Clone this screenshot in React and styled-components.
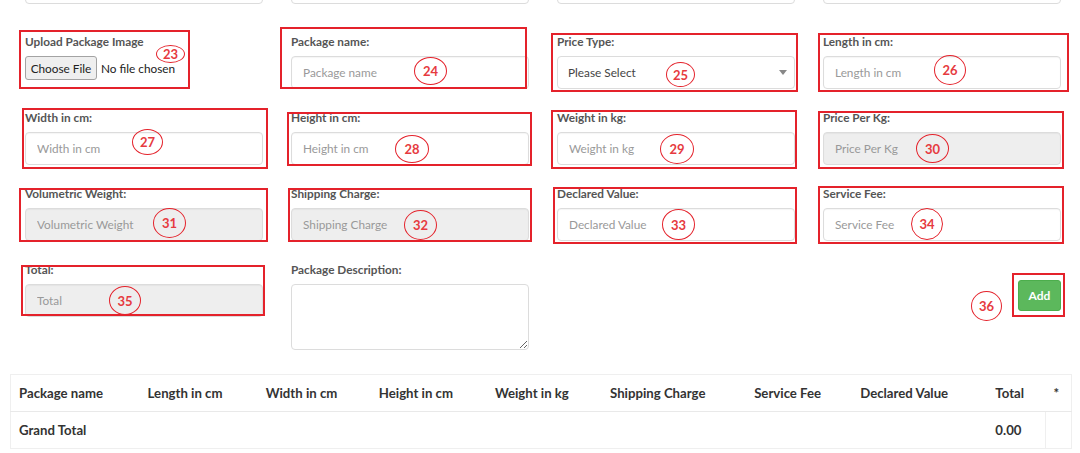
import React from "react";
import styled, { createGlobalStyle } from "styled-components";

const Global = createGlobalStyle`
  html, body { margin: 0; padding: 0; background: #fff; }
  body { font-family: Lato, "Open Sans", "Liberation Sans", sans-serif; color: #333; }
  * { box-sizing: border-box; }
`;

const Page = styled.div`
  position: relative;
  width: 1080px;
  height: 453px;
  overflow: hidden;
  background: #fff;
`;

const Form = styled.div`
  display: grid;
  grid-template-columns: repeat(4, 266px);
  row-gap: 20px;
  margin: -29px 0 0 11px;
`;

const Group = styled.div`
  display: flex;
  flex-direction: column;
  padding: 0 14px;
  margin-bottom: ${(p) => (p.$extra ? `${p.$extra}px` : "0")};
`;

const Label = styled.label`
  display: block;
  height: 18px;
  line-height: 18px;
  margin-bottom: 5px;
  font-size: 11.8px;
  font-weight: 700;
  color: #555;
  white-space: nowrap;
`;

const Input = styled.input`
  width: 238px;
  height: 33px;
  padding: 0 11px;
  border: 1px solid #dcdcdc;
  border-radius: 4px;
  background: ${(p) => (p.disabled ? "#eeeeee" : "#fff")};
  font-family: inherit;
  font-size: 11.8px;
  color: #555;
  box-shadow: inset 0 1px 1px rgba(0, 0, 0, 0.04);
  &::placeholder { color: #999; opacity: 1; }
`;

const TextArea = styled.textarea`
  width: 238px;
  height: 66px;
  padding: 6px 11px;
  border: 1px solid #dcdcdc;
  border-radius: 4px;
  resize: vertical;
  font-family: inherit;
  font-size: 11.8px;
  display: block;
`;

const SelectBox = styled.div`
  position: relative;
  width: 238px;
  height: 33px;
  padding: 0 10px;
  border: 1px solid #dcdcdc;
  border-radius: 4px;
  display: flex;
  align-items: center;
  font-size: 11.8px;
  color: #444;
`;

const Caret = styled.span`
  position: absolute;
  right: 7px;
  top: 13px;
  width: 0;
  height: 0;
  border-left: 4px solid transparent;
  border-right: 4px solid transparent;
  border-top: 5px solid #888;
`;

const FileRow = styled.div`
  display: flex;
  align-items: center;
  gap: 4px;
  height: 24px;
  font-size: 11.8px;
  color: #222;
`;

const FileButton = styled.span`
  display: inline-flex;
  align-items: center;
  justify-content: center;
  width: 72px;
  height: 24px;
  border: 1px solid #a3a3a3;
  border-radius: 3px;
  background: #efefef;
  color: #222;
  font-size: 11.8px;
`;

const ButtonCell = styled.div`
  display: flex;
  justify-content: flex-end;
  padding: 19px 14px 0;
`;

const AddButton = styled.button`
  width: 43px;
  height: 31px;
  border: 1px solid #4cae4c;
  border-radius: 3px;
  background: #5cb85c;
  color: #fff;
  font-family: inherit;
  font-size: 12px;
  font-weight: 700;
  padding: 0;
`;

const Table = styled.table`
  margin: 24px 0 0 10px;
  width: 1062px;
  table-layout: fixed;
  border-collapse: collapse;
  border: 1px solid #efefef;
  font-size: 13.2px;
  font-weight: 700;
  color: #333;
`;

const Cell = styled.td`
  padding: 8px;
  height: ${(p) => (p.$head ? "36px" : "37px")};
  line-height: 20px;
  text-align: left;
  white-space: nowrap;
  border-top: ${(p) => (p.$head ? "none" : "1px solid #e9e9e9")};
  border-left: ${(p) => (p.$divider ? "1px solid #efefef" : "none")};
  vertical-align: ${(p) => (p.$star ? "top" : "middle")};
`;

const Box = styled.div`
  position: absolute;
  left: ${(p) => p.$x}px;
  top: ${(p) => p.$y}px;
  width: ${(p) => p.$w}px;
  height: ${(p) => p.$h}px;
  border: 2px solid #e4222b;
  pointer-events: none;
`;

const Bubble = styled.div`
  position: absolute;
  left: ${(p) => p.$x}px;
  top: ${(p) => p.$y}px;
  width: ${(p) => p.$w}px;
  height: ${(p) => p.$h}px;
  border: 1.5px solid #e4222b;
  border-radius: 50%;
  display: flex;
  align-items: center;
  justify-content: center;
  color: #e63a40;
  font-size: 13px;
  font-weight: 700;
  pointer-events: none;
`;

const topRow = ["receiver-name", "receiver-phone", "receiver-email", "receiver-address"];

const fields = [
  { label: "Width in cm:", ph: "Width in cm" },
  { label: "Height in cm:", ph: "Height in cm" },
  { label: "Weight in kg:", ph: "Weight in kg" },
  { label: "Price Per Kg:", ph: "Price Per Kg", disabled: true },
  { label: "Volumetric Weight:", ph: "Volumetric Weight", disabled: true },
  { label: "Shipping Charge:", ph: "Shipping Charge", disabled: true },
  { label: "Declared Value:", ph: "Declared Value" },
  { label: "Service Fee:", ph: "Service Fee" },
];

const columns = [
  { t: "Package name", w: 129 },
  { t: "Length in cm", w: 118 },
  { t: "Width in cm", w: 113 },
  { t: "Height in cm", w: 116 },
  { t: "Weight in kg", w: 115 },
  { t: "Shipping Charge", w: 144 },
  { t: "Service Fee", w: 106 },
  { t: "Declared Value", w: 135 },
  { t: "Total", w: 58 },
  { t: "*", w: 26 },
];

const boxes = [
  [19, 30, 190, 89],
  [280, 27, 527, 89],
  [551, 33, 798, 92],
  [818, 33, 1069, 92],
  [22, 108, 268, 169],
  [287, 112, 532, 166],
  [551, 110, 797, 169],
  [818, 111, 1064, 169],
  [19, 188, 268, 242],
  [288, 188, 532, 242],
  [553, 187, 797, 244],
  [818, 186, 1064, 244],
  [21, 265, 265, 316],
  [1012, 273, 1065, 317],
];

const bubbles = [
  [23, 156, 45, 185, 63],
  [24, 414, 57, 447, 85],
  [25, 666, 62, 695, 87],
  [26, 934, 55, 966, 85],
  [27, 132, 129, 163, 155],
  [28, 395, 135, 429, 163],
  [29, 660, 134, 694, 164],
  [30, 916, 134, 949, 163],
  [31, 153, 208, 186, 238],
  [32, 404, 210, 437, 240],
  [33, 662, 209, 695, 240],
  [34, 911, 208, 943, 240],
  [35, 109, 286, 141, 315],
  [36, 971, 291, 1002, 321],
];

export default function App() {
  return (
    <Page>
      <Global />
      <Form>
        {topRow.map((l) => (
          <Group key={l} $extra={9}>
            <Input aria-label={l} />
          </Group>
        ))}

        <Group>
          <Label>Upload Package Image</Label>
          <FileRow>
            <FileButton>Choose File</FileButton>
            <span>No file chosen</span>
          </FileRow>
        </Group>
        <Group>
          <Label>Package name:</Label>
          <Input placeholder="Package name" />
        </Group>
        <Group>
          <Label>Price Type:</Label>
          <SelectBox>
            Please Select
            <Caret />
          </SelectBox>
        </Group>
        <Group>
          <Label>Length in cm:</Label>
          <Input placeholder="Length in cm" />
        </Group>

        {fields.map((f) => (
          <Group key={f.label}>
            <Label>{f.label}</Label>
            <Input placeholder={f.ph} disabled={f.disabled} />
          </Group>
        ))}

        <Group>
          <Label>Total:</Label>
          <Input placeholder="Total" disabled />
        </Group>
        <Group>
          <Label>Package Description:</Label>
          <TextArea />
        </Group>
        <div />
        <ButtonCell>
          <AddButton>Add</AddButton>
        </ButtonCell>
      </Form>

      <Table>
        <colgroup>
          {columns.map((c) => (
            <col key={c.t} style={{ width: c.w }} />
          ))}
        </colgroup>
        <thead>
          <tr>
            {columns.map((c) => (
              <Cell as="th" key={c.t} $head $star={c.t === "*"}>
                {c.t}
              </Cell>
            ))}
          </tr>
        </thead>
        <tbody>
          <tr>
            <Cell>Grand Total</Cell>
            <Cell colSpan={7} />
            <Cell>0.00</Cell>
            <Cell $divider />
          </tr>
        </tbody>
      </Table>

      {boxes.map(([x1, y1, x2, y2], i) => (
        <Box key={i} $x={x1} $y={y1} $w={x2 - x1} $h={y2 - y1} />
      ))}
      {bubbles.map(([n, x1, y1, x2, y2]) => (
        <Bubble key={n} $x={x1} $y={y1} $w={x2 - x1} $h={y2 - y1}>
          {n}
        </Bubble>
      ))}
    </Page>
  );
}
